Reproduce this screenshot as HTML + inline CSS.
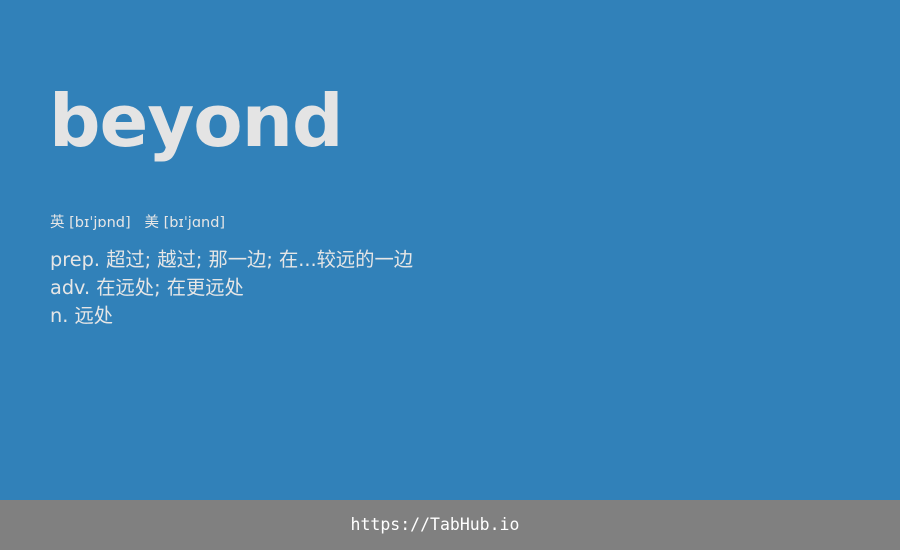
<!DOCTYPE html>
<html><head><meta charset="utf-8"><style>
html,body{margin:0;padding:0}
body{width:900px;height:550px;background:#3181b9;position:relative;overflow:hidden;font-family:"DejaVu Sans","Noto Sans CJK SC",sans-serif;color:#e6e6e6}
h1{position:absolute;left:49px;top:85px;margin:0;font-family:"DejaVu Sans",sans-serif;font-size:72px;font-weight:bold;letter-spacing:-1px;line-height:72px;color:#e4e4e4}
.ph{position:absolute;left:50px;top:213px;font-size:14.5px;line-height:20px;white-space:pre}
.def{position:absolute;left:50px;top:246px;font-size:19.3px;line-height:28px}
.foot{position:absolute;left:0;top:500px;width:870px;padding-right:30px;height:50px;background:#808080;color:#fff;font-family:"DejaVu Sans Mono",monospace;font-size:16.5px;line-height:50px;text-align:center}
</style></head><body>
<h1>beyond</h1>
<div class="ph">英 [bɪˈjɒnd]   美 [bɪˈjɑnd]</div>
<div class="def">prep. 超过; 越过; 那一边; 在...较远的一边<br>adv. 在远处; 在更远处<br>n. 远处</div>
<div class="foot">https://TabHub.io</div>
</body></html>
